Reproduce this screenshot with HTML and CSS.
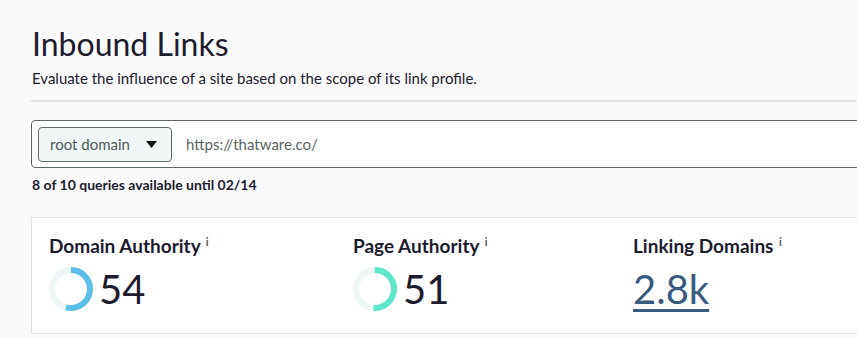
FILE: index.html
```html
<!DOCTYPE html>
<html lang="en">

<head>
    <meta charset="UTF-8">
    <meta name="viewport" content="width=device-width, initial-scale=1.0">
    <title>Inbound Links</title>
    <link rel="stylesheet" href="styles.css">
</head>

<body>
    <div class="page">
        <h1 class="title">Inbound Links</h1>
        <p class="subtitle">Evaluate the influence of a site based on the scope of its link profile.</p>
        <hr class="divider">

        <div class="search-box">
            <div class="scope-select">
                <span>root domain</span>
                <svg class="caret" width="11" height="7" viewBox="0 0 11 7"><path d="M0 0h11L5.5 7z" fill="#111"/></svg>
            </div>
            <span class="url">https://thatware.co/</span>
        </div>
        <div class="quota">8 of 10 queries available until 02/14</div>

        <div class="metrics">
            <div class="metric metric-da">
                <div class="metric-label">Domain Authority <sup>i</sup></div>
                <div class="metric-value">
                    <svg class="ring" width="44" height="44" viewBox="0 0 44 44">
                        <circle cx="22" cy="22" r="19" fill="none" stroke="#eef6f8" stroke-width="6"/>
                        <circle cx="22" cy="22" r="19" fill="none" stroke="#5bbfea" stroke-width="6"
                            stroke-dasharray="64.5 200" transform="rotate(-90 22 22)"/>
                    </svg>
                    <span class="number">54</span>
                </div>
            </div>
            <div class="metric metric-pa">
                <div class="metric-label">Page Authority <sup>i</sup></div>
                <div class="metric-value">
                    <svg class="ring" width="44" height="44" viewBox="0 0 44 44">
                        <circle cx="22" cy="22" r="19" fill="none" stroke="#eef6f6" stroke-width="6"/>
                        <circle cx="22" cy="22" r="19" fill="none" stroke="#5ee6c9" stroke-width="6"
                            stroke-dasharray="60.9 200" transform="rotate(-90 22 22)"/>
                    </svg>
                    <span class="number">51</span>
                </div>
            </div>
            <div class="metric metric-ld">
                <div class="metric-label">Linking Domains <sup>i</sup></div>
                <div class="metric-value">
                    <a href="javascript:void(0);" class="number link">2.8k</a>
                </div>
            </div>
        </div>
    </div>
</body>

</html>
```

FILE: styles.css
```css
* {
    box-sizing: border-box;
}

body {
    margin: 0;
    font-family: Lato, 'Noto Sans', sans-serif;
    background: #fafafa;
    color: #1c1b2e;
    overflow: hidden;
}

.page {
    width: 1000px;
    padding: 25px 0 0 31px;
}

.title {
    margin: 0 0 0 1px;
    font-size: 32px;
    font-weight: 400;
    line-height: 38px;
}

.subtitle {
    margin: 6px 0 0 1px;
    font-size: 15px;
    line-height: 19px;
}

.divider {
    margin: 12px 0 0;
    border: none;
    height: 2px;
    background: #dfe3e3;
}

.search-box {
    display: flex;
    align-items: center;
    margin-top: 18px;
    height: 48px;
    padding: 0 6px;
    background: #fff;
    border: 1px solid #5d6866;
    border-radius: 4px;
}

.scope-select {
    display: flex;
    align-items: center;
    justify-content: space-between;
    width: 134px;
    height: 35px;
    padding: 0 14px 0 11px;
    background: #f0f7f6;
    border: 1px solid #5d6b69;
    border-radius: 4px;
    font-size: 15px;
    color: #4f5a59;
}

.url {
    margin-left: 14px;
    font-size: 15px;
    color: #5a6463;
}

.quota {
    margin: 8px 0 0 1px;
    font-size: 14px;
    font-weight: 700;
    color: #1c1b2e;
}

.metrics {
    display: flex;
    margin-top: 24px;
    height: 117px;
    padding: 12px 0 0 17px;
    background: #fff;
    border: 1px solid #dfe3e3;
}

.metric-da {
    width: 304px;
}

.metric-pa {
    width: 280px;
}

.metric-label {
    font-size: 19px;
    font-weight: 700;
    line-height: 24px;
}

.metric-label sup {
    font-size: 11px;
    font-weight: 700;
    vertical-align: 7px;
    margin-left: 1px;
    color: #555;
}

.metric-value {
    display: flex;
    align-items: center;
    gap: 6px;
    margin-top: 9px;
}

.ring {
    display: block;
}

.number {
    font-size: 40px;
    font-weight: 400;
    line-height: 44px;
    color: #1c1b2e;
}

.link {
    color: #3a5a7e;
    text-decoration: underline;
    text-decoration-thickness: 3px;
    text-underline-offset: 5px;
}
```
